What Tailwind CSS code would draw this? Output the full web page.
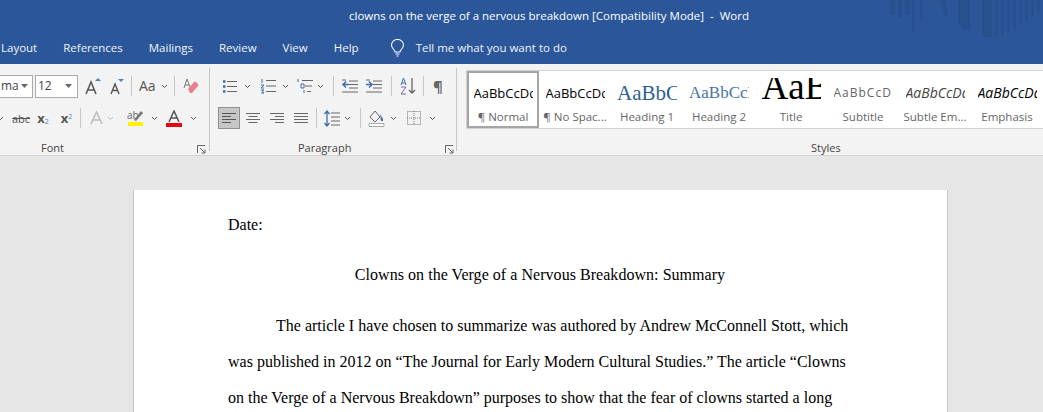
<!DOCTYPE html>
<html lang="en">

<head>
  <meta charset="UTF-8">
  <title>clowns on the verge of a nervous breakdown - Word</title>
  <script src="https://cdn.jsdelivr.net/npm/@tailwindcss/browser@4"></script>
</head>

<body class="h-[412px] w-[1043px] overflow-hidden bg-[#e6e6e6] font-['Open_Sans',sans-serif] text-[#444]">
  <!-- blue title + tabs -->
  <header class="relative h-16 bg-[#2b579a] text-white">
    <svg class="absolute right-0 top-0" width="153" height="38" viewBox="0 0 153 38" fill="#27508f">
      <path d="M0 0h5v15H0zM8 0h4v18H8zM15 0h5v15h-5zM22 0h3v32h-3zM30 0h3v20h-3zM50 0h5l3 14-3 2zM68 0h12v30h-6l-6-8zM92 0h10v37H92zM105 0h3v36h-3zM111 0h3v35h-3zM117 0h3v33h-3zM123 0h3v29h-3zM129 0h3v25h-3zM135 0h3v21h-3zM141 0h3v16h-3zM147 0h3v12h-3z" />
    </svg>
    <div class="relative flex h-8 items-center justify-center pl-[55px] text-[11.500px] whitespace-pre">clowns on the verge of a nervous breakdown [Compatibility Mode]  -  Word</div>
    <nav class="flex h-8 items-center gap-[26px] pl-px text-[11.500px] text-[#f1f4f9]">
      <span>Layout</span>
      <span>References</span>
      <span>Mailings</span>
      <span>Review</span>
      <span>View</span>
      <span>Help</span>
      <div class="ml-[5px] flex items-center gap-[11px]">
        <svg width="15" height="18" viewBox="0 0 15 18" fill="none" stroke="#fff" stroke-width="1.1">
          <path d="M5 13c0-2-3.500-3.500-3.500-7a6 5.500 0 0 1 12 0c0 3.500-3.500 5-3.500 7zM5.500 15h4M6.500 17h2" />
        </svg>
        <span>Tell me what you want to do</span>
      </div>
    </nav>
  </header>

  <!-- ribbon -->
  <section class="flex h-[92px] border-b border-[#d2d2d2] bg-[#f3f3f3]">
    <!-- Font -->
    <div class="relative w-[210px] shrink-0 border-r border-[#c6c6c6] my-[4px]">
      <div class="mt-[7px] flex h-[22px] items-center">
        <div class="ml-[-10px] flex h-[23px] w-[43px] items-center justify-between border border-[#ababab] bg-white pl-[10px] pr-[4px] text-[12px]">ma
          <svg width="7" height="4" viewBox="0 0 7 4" fill="#666"><path d="M0 0h7L3.500 4z" /></svg>
        </div>
        <div class="ml-[2px] flex h-[23px] w-[43px] items-center justify-between border border-[#ababab] bg-white pl-[2px] pr-[5px] text-[12px]">12
          <svg width="7" height="4" viewBox="0 0 7 4" fill="#666"><path d="M0 0h7L3.500 4z" /></svg>
        </div>
        <svg class="ml-[7px]" width="16" height="18" viewBox="0 0 16 18" fill="none"><path d="M1 17 6 5l5 12M3 13h6" stroke="#555" stroke-width="1.500" /><path d="m10 4 3-3 3 3z" fill="#5b7ea8" /></svg>
        <svg class="ml-[9px]" width="14" height="17" viewBox="0 0 14 17" fill="none"><path d="m1 16 4-10 4 10M3 12.500h4" stroke="#555" stroke-width="1.400" /><path d="m8 1 3 3 3-3z" fill="#5b7ea8" /></svg>
        <div class="ml-[7px] h-[20px] w-px bg-[#c6c6c6]"></div>
        <span class="ml-[7px] text-[14px] leading-none text-[#555]">Aa</span>
        <svg class="ml-[5px]" width="7" height="5" viewBox="0 0 7 5" fill="none" stroke="#555"><path d="m1 1 2.500 2.500L6 1" /></svg>
        <div class="ml-[6px] h-[20px] w-px bg-[#c6c6c6]"></div>
        <svg class="ml-[8px]" width="16" height="16" viewBox="0 0 16 16" fill="none"><path d="M1 10 4 1l3 8M2 7h4" stroke="#777" /><path d="m5 11 6-7q1-1 2 0l2 2q1 1 0 2l-6 7H7z" fill="#e9808c" /></svg>
      </div>
      <div class="mt-[10px] flex h-[22px] items-center">
        <svg class="ml-[-3px]" width="7" height="5" viewBox="0 0 7 5" fill="none" stroke="#555"><path d="m1 1 2.500 2.500L6 1" /></svg>
        <span class="ml-[8px] text-[11px] leading-none text-[#555] line-through">abc</span>
        <span class="ml-[7px] text-[13px] font-bold leading-none text-[#555]">x<sub class="text-[7px] font-normal text-[#5b7ea8]">2</sub></span>
        <span class="ml-[12px] text-[13px] font-bold leading-none text-[#555]">x<sup class="text-[7px] font-normal text-[#5b7ea8]">2</sup></span>
        <div class="ml-[8px] h-[20px] w-px bg-[#c6c6c6]"></div>
        <svg class="ml-[9px]" width="13" height="14" viewBox="0 0 13 14" fill="none" stroke="#bbb" stroke-width="1.500"><path d="M1 13 6.500 1 12 13M3.500 9h6" /></svg>
        <svg class="ml-[4px]" width="7" height="5" viewBox="0 0 7 5" fill="none" stroke="#bbb"><path d="m1 1 2.500 2.500L6 1" /></svg>
        <svg class="ml-[13px]" width="17" height="18" viewBox="0 0 17 18" fill="none"><text x="0" y="10" font-size="10" fill="#666" font-family="Open Sans">ab</text><path d="m7 11 7-9 2 2-7 8z" fill="#777" /><path d="M1 13h15v4H1z" fill="#fff200" /></svg>
        <svg class="ml-[7px]" width="7" height="5" viewBox="0 0 7 5" fill="none" stroke="#555"><path d="m1 1 2.500 2.500L6 1" /></svg>
        <svg class="ml-[8px]" width="16" height="17" viewBox="0 0 16 17" fill="none"><path d="m3 12 5-11 5 11M5 8h6" stroke="#555" stroke-width="1.500" /><path d="M0 13h16v4H0z" fill="#e30613" /></svg>
        <svg class="ml-[8px]" width="7" height="5" viewBox="0 0 7 5" fill="none" stroke="#555"><path d="m1 1 2.500 2.500L6 1" /></svg>
      </div>
      <div class="absolute left-[41px] top-[72px] text-[11px] leading-[16px] text-[#444]">Font</div>
      <svg class="absolute left-[197px] top-[77px]" width="9" height="9" viewBox="0 0 9 9" fill="none" stroke="#666"><path d="M.5 8V.5H8M3 3l5 5M4.500 8H8V4.500" /></svg>
    </div>

    <!-- Paragraph -->
    <div class="relative my-[4px] w-[247px] shrink-0 border-r border-[#c6c6c6]">
      <div class="mt-[7px] flex h-[22px] items-center">
        <svg class="ml-[12px]" width="15" height="15" viewBox="0 0 15 15" fill="none" stroke="#666"><path d="M5 2.500h10M5 7.500h10M5 12.500h10" /><path d="M1 2.500h2.500M1 7.500h2.500M1 12.500h2.500" stroke="#3f6ea8" stroke-width="2.500" /></svg>
        <svg class="ml-[7px]" width="7" height="5" viewBox="0 0 7 5" fill="none" stroke="#555"><path d="m1 1 2.500 2.500L6 1" /></svg>
        <svg class="ml-[9px]" width="16" height="16" viewBox="0 0 16 16" fill="none" stroke="#666"><path d="M6 2.500h10M6 8h10M6 13.500h10" /><path d="M2 1v4M1 7h3L1 10h3M1 12h3L2 13.500l2 1.500H1" stroke="#3f6ea8" /></svg>
        <svg class="ml-[6px]" width="7" height="5" viewBox="0 0 7 5" fill="none" stroke="#555"><path d="m1 1 2.500 2.500L6 1" /></svg>
        <svg class="ml-[7px]" width="18" height="16" viewBox="0 0 18 16" fill="none" stroke="#666"><path d="M6 2.500h11M9 8h7M11 13.500h4" /><path d="M2 1v3M5 6h3v4H5zM8 12v3" stroke="#3f6ea8" /></svg>
        <svg class="ml-[3px]" width="7" height="5" viewBox="0 0 7 5" fill="none" stroke="#555"><path d="m1 1 2.500 2.500L6 1" /></svg>
        <div class="ml-[9px] h-[20px] w-px bg-[#c6c6c6]"></div>
        <svg class="ml-[7px]" width="17" height="14" viewBox="0 0 17 14" fill="none"><path d="M8 2h9M8 5.500h9M8 9h9M1 13h16M1 1h4" stroke="#666" /><path d="M8 5.500H2M5 2.500l-3 3 3 3" stroke="#3f6ea8" stroke-width="1.500" /></svg>
        <svg class="ml-[7px]" width="17" height="14" viewBox="0 0 17 14" fill="none"><path d="M8 2h9M8 5.500h9M8 9h9M1 13h16M1 1h4" stroke="#666" /><path d="M1 5.500h6M4 2.500l3 3-3 3" stroke="#3f6ea8" stroke-width="1.500" /></svg>
        <div class="ml-[9px] h-[20px] w-px bg-[#c6c6c6]"></div>
        <svg class="ml-[8px]" width="16" height="18" viewBox="0 0 16 18" fill="none"><path d="M1 8 3.500 1 6 8M2 6h3" stroke="#3f6ea8" /><path d="M1 10h5L1 17h5" stroke="#8f5fa8" /><path d="M12 1v15M9 13l3 3 3-3" stroke="#666" stroke-width="1.300" /></svg>
        <div class="ml-[7px] h-[20px] w-px bg-[#c6c6c6]"></div>
        <span class="ml-[9px] text-[15px] font-bold leading-none text-[#666]">¶</span>
      </div>
      <div class="mt-[10px] flex h-[22px] items-center">
        <div class="ml-[8px] flex h-[22px] w-[22px] items-center justify-center border border-[#8f8f8f] bg-[#c6c6c6]">
          <svg width="14" height="10" viewBox="0 0 14 10" fill="none" stroke="#555"><path d="M0 .5h14M0 3.500h9M0 6.500h14M0 9.500h9" /></svg>
        </div>
        <svg class="ml-[6px]" width="14" height="10" viewBox="0 0 14 10" fill="none" stroke="#666"><path d="M0 .5h14M2.500 3.500h9M0 6.500h14M2.500 9.500h9" /></svg>
        <svg class="ml-[10px]" width="14" height="10" viewBox="0 0 14 10" fill="none" stroke="#666"><path d="M0 .5h14M5 3.500h9M0 6.500h14M5 9.500h9" /></svg>
        <svg class="ml-[10px]" width="14" height="10" viewBox="0 0 14 10" fill="none" stroke="#666"><path d="M0 .5h14M0 3.500h14M0 6.500h14M0 9.500h14" /></svg>
        <div class="ml-[8px] h-[20px] w-px bg-[#c6c6c6]"></div>
        <svg class="ml-[7px]" width="16" height="17" viewBox="0 0 16 17" fill="none"><path d="M7 3h9M7 7h9M7 11h9M7 15h9" stroke="#666" /><path d="M3 1v15M.5 4 3 1l2.500 3M.5 13 3 16l2.500-3" stroke="#3f6ea8" stroke-width="1.300" /></svg>
        <svg class="ml-[4px]" width="7" height="5" viewBox="0 0 7 5" fill="none" stroke="#555"><path d="m1 1 2.500 2.500L6 1" /></svg>
        <div class="ml-[9px] h-[20px] w-px bg-[#c6c6c6]"></div>
        <svg class="ml-[7px]" width="17" height="18" viewBox="0 0 17 18" fill="none"><path d="m2 8 5-6 5 6-5 5z" stroke="#666" /><path d="m12 5 3 5v2h-2z" fill="#3f6ea8" /><path d="M1 14.500h15v3H1z" stroke="#aaa" fill="#fff" /></svg>
        <svg class="ml-[5px]" width="7" height="5" viewBox="0 0 7 5" fill="none" stroke="#555"><path d="m1 1 2.500 2.500L6 1" /></svg>
        <svg class="ml-[10px]" width="14" height="14" viewBox="0 0 14 14" fill="none" stroke="#777" stroke-dasharray="1 1"><path d="M.5.500h13v13H.5zM7 0v14M0 7h14" /></svg>
        <svg class="ml-[8px]" width="7" height="5" viewBox="0 0 7 5" fill="none" stroke="#555"><path d="m1 1 2.500 2.500L6 1" /></svg>
      </div>
      <div class="absolute left-[88px] top-[72px] text-[11px] leading-[16px] text-[#444]">Paragraph</div>
      <svg class="absolute left-[235px] top-[77px]" width="9" height="9" viewBox="0 0 9 9" fill="none" stroke="#666"><path d="M.5 8V.5H8M3 3l5 5M4.500 8H8V4.500" /></svg>
    </div>

    <!-- Styles -->
    <div class="relative ml-[9px] flex-1">
      <div class="mt-[6px] flex h-[59px] border-y border-l border-[#d2d2d2] bg-white">
        <div class="flex w-[72px] shrink-0 flex-col items-center border-2 border-[#a5a5a5] pt-[10px]">
          <div class="h-[20px] w-[59px] overflow-hidden whitespace-nowrap text-[13px] leading-[20px] text-black">AaBbCcDd</div>
          <div class="mt-[6px] text-[11.500px] leading-[16px] text-[#666]">¶ Normal</div>
        </div>
        <div class="flex w-[72px] shrink-0 flex-col items-center pt-[12px]">
          <div class="h-[20px] w-[59px] overflow-hidden whitespace-nowrap text-[13px] leading-[20px] text-black">AaBbCcDd</div>
          <div class="mt-[6px] text-[11.500px] leading-[16px] text-[#666]">¶ No Spac...</div>
        </div>
        <div class="flex w-[72px] shrink-0 flex-col items-center pt-[12px]">
          <div class="h-[20px] w-[60px] overflow-hidden whitespace-nowrap font-['Liberation_Serif',serif] text-[21px] leading-[20px] text-[#2e5f91]">AaBbC</div>
          <div class="mt-[6px] text-[11.500px] leading-[16px] text-[#666]">Heading 1</div>
        </div>
        <div class="flex w-[72px] shrink-0 flex-col items-center pt-[12px]">
          <div class="h-[20px] w-[60px] overflow-hidden whitespace-nowrap font-['Liberation_Serif',serif] text-[17px] leading-[20px] text-[#4a76a6]">AaBbCcD</div>
          <div class="mt-[6px] text-[11.500px] leading-[16px] text-[#666]">Heading 2</div>
        </div>
        <div class="flex w-[72px] shrink-0 flex-col items-center pt-[7px]">
          <div class="h-[24px] w-[59px] overflow-hidden whitespace-nowrap font-['Liberation_Serif',serif] text-[37px] leading-[17px] text-black">AaB</div>
          <div class="mt-[7px] text-[11.500px] leading-[16px] text-[#666]">Title</div>
        </div>
        <div class="flex w-[72px] shrink-0 flex-col items-center pt-[12px]">
          <div class="h-[20px] w-[59px] overflow-hidden whitespace-nowrap text-[12px] leading-[20px] tracking-[1px] text-[#666]">AaBbCcD</div>
          <div class="mt-[6px] text-[11.500px] leading-[16px] text-[#666]">Subtitle</div>
        </div>
        <div class="flex w-[72px] shrink-0 flex-col items-center pt-[12px]">
          <div class="h-[20px] w-[59px] overflow-hidden whitespace-nowrap text-[14px] italic leading-[20px] text-[#444]">AaBbCcDd</div>
          <div class="mt-[6px] text-[11.500px] leading-[16px] text-[#666]">Subtle Em...</div>
        </div>
        <div class="flex w-[72px] shrink-0 flex-col items-center pt-[12px]">
          <div class="h-[20px] w-[59px] overflow-hidden whitespace-nowrap text-[14px] font-medium italic leading-[20px] text-black">AaBbCcDd</div>
          <div class="mt-[6px] text-[11.500px] leading-[16px] text-[#666]">Emphasis</div>
        </div>
      </div>
      <div class="absolute left-[345px] top-[76px] text-[11px] leading-[16px] text-[#444]">Styles</div>
    </div>
  </section>

  <!-- document page -->
  <main class="ml-[133px] mt-[34px] h-[222px] w-[815px] overflow-hidden border-x border-[#c6c6c6] bg-white pl-[94px] pt-[17px] font-['Liberation_Serif',serif] text-[16px] text-black">
    <p class="leading-[36px]">Date:</p>
    <p class="mt-[14px] w-[624px] text-center leading-[36px] tracking-[0.04px]">Clowns on the Verge of a Nervous Breakdown: Summary</p>
    <p class="mt-[15px] w-[624px] indent-12 leading-[36px]">The article I have chosen to summarize was authored by Andrew McConnell Stott, which was published in 2012 on “The Journal for Early Modern Cultural Studies.” The article “Clowns on the Verge of a Nervous Breakdown” purposes to show that the fear of clowns started a long</p>
  </main>
</body>

</html>
